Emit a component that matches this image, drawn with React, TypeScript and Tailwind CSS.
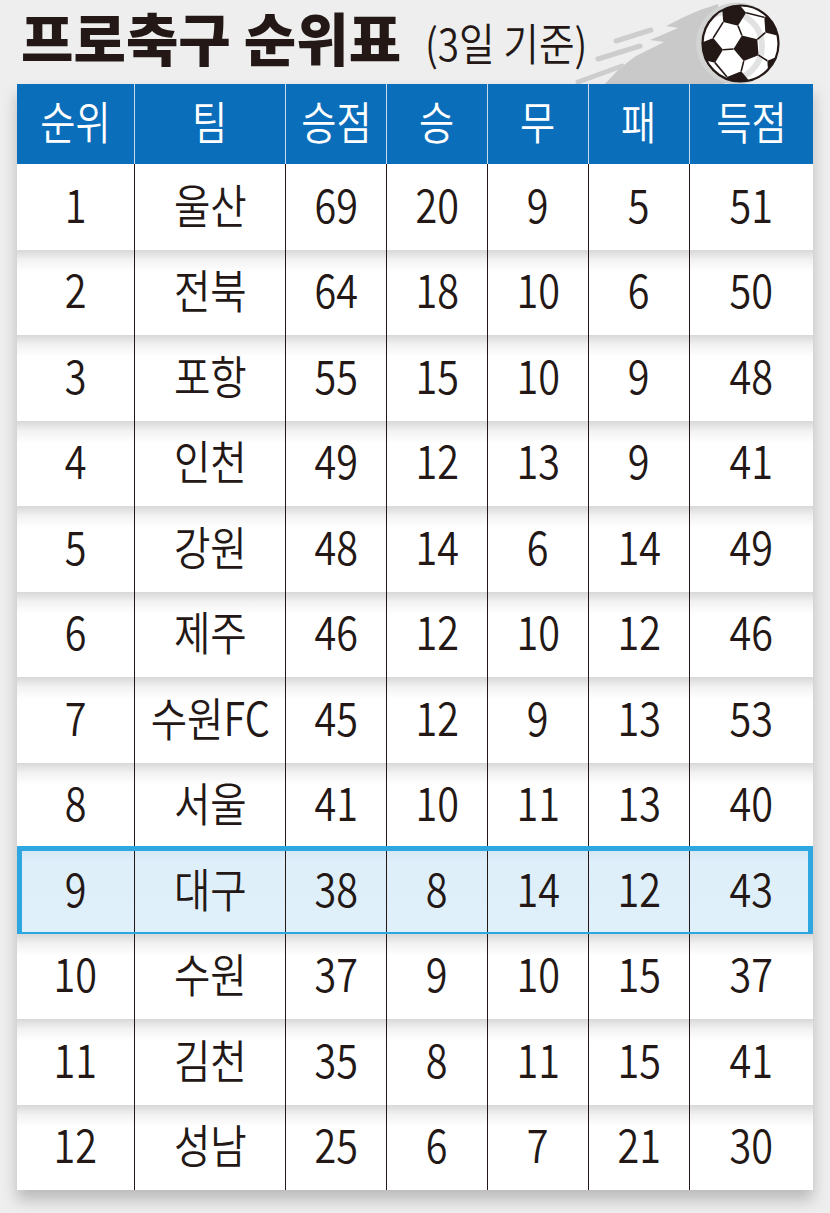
import React from "react";

const cols = ["순위", "팀", "승점", "승", "무", "패", "득점"];
const rows: (string | number)[][] = [
  [1, "울산", 69, 20, 9, 5, 51],
  [2, "전북", 64, 18, 10, 6, 50],
  [3, "포항", 55, 15, 10, 9, 48],
  [4, "인천", 49, 12, 13, 9, 41],
  [5, "강원", 48, 14, 6, 14, 49],
  [6, "제주", 46, 12, 10, 12, 46],
  [7, "수원FC", 45, 12, 9, 13, 53],
  [8, "서울", 41, 10, 11, 13, 40],
  [9, "대구", 38, 8, 14, 12, 43],
  [10, "수원", 37, 9, 10, 15, 37],
  [11, "김천", 35, 8, 11, 15, 41],
  [12, "성남", 25, 6, 7, 21, 30],
];

const FONT = "[font-family:'Noto_Sans_CJK_KR','Noto_Sans',sans-serif]";

function pent(cx: number, cy: number, r: number, rotDeg: number) {
  const pts: string[] = [];
  for (let i = 0; i < 5; i++) {
    const a = ((rotDeg + i * 72) * Math.PI) / 180;
    pts.push(`${(cx + r * Math.cos(a)).toFixed(2)},${(cy + r * Math.sin(a)).toFixed(2)}`);
  }
  return pts.join(" ");
}

function Ball() {
  const C = { x: 747, y: 48 };
  const r = 13.5;
  const D = 37;
  const base = -112;
  const outer = [0, 1, 2, 3, 4].map((k) => {
    const a = base + k * 72;
    const rad = (a * Math.PI) / 180;
    const vx = C.x + r * Math.cos(rad);
    const vy = C.y + r * Math.sin(rad);
    const ox = C.x + D * Math.cos(rad);
    const oy = C.y + D * Math.sin(rad);
    const ro = 13;
    const ix = ox + ro * Math.cos(rad + Math.PI);
    const iy = oy + ro * Math.sin(rad + Math.PI);
    return { a, vx, vy, ox, oy, ro, ix, iy };
  });
  const seams: { x1: number; y1: number; x2: number; y2: number }[] = [];
  outer.forEach((o, k) => {
    seams.push({ x1: o.vx, y1: o.vy, x2: o.ix, y2: o.iy });
    const n = outer[(k + 1) % 5];
    const a1 = ((o.a + 180 + 72 * 4) * Math.PI) / 180;
    const a2 = ((n.a + 180 + 72) * Math.PI) / 180;
    seams.push({
      x1: o.ox + o.ro * Math.cos(a1),
      y1: o.oy + o.ro * Math.sin(a1),
      x2: n.ox + n.ro * Math.cos(a2),
      y2: n.oy + n.ro * Math.sin(a2),
    });
  });
  return (
    <svg className="absolute left-[560px] top-0" width="240" height="90" viewBox="560 0 240 90">
      <defs>
        <clipPath id="ballclip">
          <circle cx="740.5" cy="43.5" r="38" />
        </clipPath>
      </defs>
      <polygon
        points="718,4 700,10 684,17 666,26 678,28 650,40 664,42 636,56 620,68 603,86 712,86 732,82"
        fill="#c9c9c9"
      />
      <circle cx="737" cy="43.5" r="41" fill="#d3d3d3" />
      <g stroke="#cdcdcd" strokeWidth="5" strokeLinecap="round">
        <line x1="616" y1="41" x2="651" y2="30" />
        <line x1="598" y1="59" x2="640" y2="46" />
        <line x1="578" y1="82" x2="622" y2="66" />
      </g>
      <circle cx="740.5" cy="43.5" r="38" fill="#ffffff" />
      <g clipPath="url(#ballclip)">
        <circle cx="728" cy="46" r="34" fill="none" stroke="#e2e2e2" strokeWidth="6" />
        <g stroke="#231815" strokeWidth="1.6">
          {seams.map((s, i) => (
            <line key={i} x1={s.x1} y1={s.y1} x2={s.x2} y2={s.y2} />
          ))}
        </g>
        <polygon points={pent(C.x, C.y, r, base)} fill="#231815" />
        {outer.map((o, i) => (
          <polygon key={i} points={pent(o.ox, o.oy, o.ro, o.a + 180)} fill="#231815" />
        ))}
      </g>
      <circle cx="740.5" cy="43.5" r="38" fill="none" stroke="#231815" strokeWidth="2.2" />
    </svg>
  );
}

function Cell({ children, first }: { children: React.ReactNode; first?: boolean }) {
  return (
    <div
      className={`flex items-center justify-center pb-[8px] ${first ? "" : "border-l border-[#231815]"}`}
    >
      <span className="inline-block scale-x-[0.86] whitespace-nowrap">{children}</span>
    </div>
  );
}

export default function App() {
  return (
    <div className={`relative w-[830px] h-[1213px] overflow-hidden bg-[#eeeeee] ${FONT}`}>
      <Ball />
      <div className="relative h-[84px] pl-[21px] pt-[5px] flex items-baseline gap-[24px] text-[#231815]">
        <span className="text-[57px] leading-[62px] font-black whitespace-nowrap">프로축구 순위표</span>
        <span className="inline-block origin-left scale-x-[0.88] text-[44px] leading-[62px] font-[350] whitespace-nowrap">
          (3일 기준)
        </span>
      </div>
      <div className="relative ml-[17px] w-[796px] shadow-[0_10px_14px_rgba(0,0,0,0.22)]">
        <div className="grid h-[80px] grid-cols-[117px_151px_101px_101px_101px_101px_124px] bg-[#0b6ebb] text-white text-[45px] leading-none font-[350]">
          {cols.map((c, i) => (
            <div
              key={c}
              className={`flex items-center justify-center pb-[8px] ${i === 0 ? "" : "border-l border-[#c9d9ec]"}`}
            >
              <span className="inline-block scale-x-[0.85] whitespace-nowrap">{c}</span>
            </div>
          ))}
        </div>
        <div className="grid grid-rows-[repeat(12,85.5px)] text-[46px] leading-none font-[350] text-[#231815]">
          {rows.map((r, ri) => {
            const hl = r[0] === 9;
            const bg = hl
              ? "bg-[linear-gradient(to_bottom,#d3e6f3_0px,#deeffa_14px,#e0f0fb_100%)]"
              : ri === 0
              ? "bg-white"
              : "bg-[linear-gradient(to_bottom,#d8d8d8_0px,#f2f2f2_10px,#ffffff_22px,#ffffff_100%)]";
            return (
              <div
                key={ri}
                className={`relative grid grid-cols-[117px_151px_101px_101px_101px_101px_124px] ${bg}`}
              >
                {r.map((v, ci) => (
                  <Cell key={ci} first={ci === 0}>
                    {v}
                  </Cell>
                ))}
                {hl && (
                  <div className="pointer-events-none absolute inset-x-0 -top-[2px] -bottom-[3px] border-[5px] border-[#2ea7e0]" />
                )}
              </div>
            );
          })}
        </div>
      </div>
    </div>
  );
}
